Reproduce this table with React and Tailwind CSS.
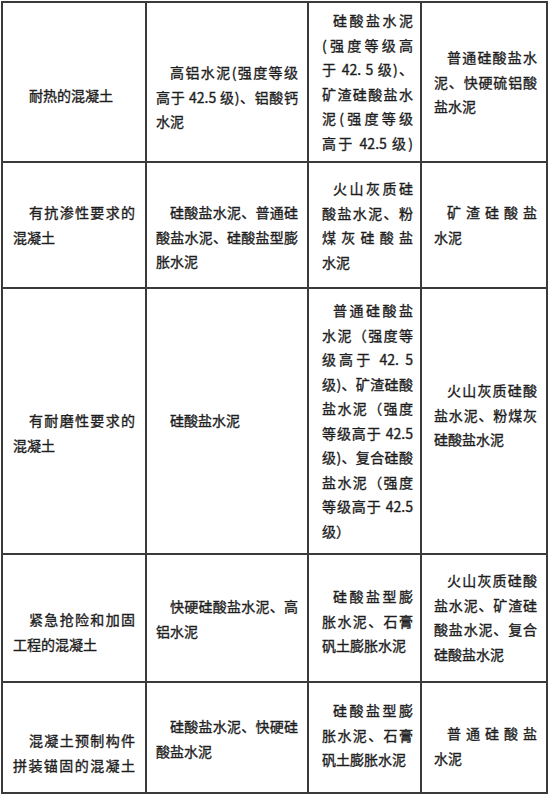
import clsx from "clsx";

// column paddings / first-line indent, matched to the scan
const COLS = [
  { pad: "pl-[10px] pr-[10px]", indent: "pl-[16px]" },
  { pad: "pl-[9px] pr-[9px]", indent: "pl-[14px]" },
  { pad: "pl-[13px] pr-[7px]", indent: "pl-[11px]" },
  { pad: "pl-[12px] pr-[9px]", indent: "pl-[13px]" },
];

// j = how many lines (from the top) are spread to the full width
const ROWS = [
  [
    { pt: "pt-[80px]", j: 0, lines: ["耐热的混凝土"] },
    { pt: "pt-[57px]", j: 2, lines: ["高铝水泥(强度等级", "高于 42.5 级)、铝酸钙", "水泥"] },
    {
      pt: "pt-[5px]",
      j: 6,
      lines: ["硅酸盐水泥", "(强度等级高", "于 42. 5 级)、", "矿渣硅酸盐水", "泥(强度等级", "高于 42.5 级)"],
    },
    { pt: "pt-[42px]", j: 2, lines: ["普通硅酸盐水", "泥、快硬硫铝酸", "盐水泥"] },
  ],
  [
    { pt: "pt-[37px]", j: 1, lines: ["有抗渗性要求的", "混凝土"] },
    { pt: "pt-[37px]", j: 2, lines: ["硅酸盐水泥、普通硅", "酸盐水泥、硅酸盐型膨", "胀水泥"] },
    { pt: "pt-[13px]", j: 3, lines: ["火山灰质硅", "酸盐水泥、粉", "煤灰硅酸盐", "水泥"] },
    { pt: "pt-[37px]", j: 1, lines: ["矿渣硅酸盐", "水泥"] },
  ],
  [
    { pt: "pt-[119px]", j: 1, lines: ["有耐磨性要求的", "混凝土"] },
    { pt: "pt-[119px]", j: 0, lines: ["硅酸盐水泥"] },
    {
      pt: "pt-[9px]",
      j: 9,
      lines: [
        "普通硅酸盐",
        "水泥（强度等",
        "级高于 42. 5",
        "级)、矿渣硅酸",
        "盐水泥（强度",
        "等级高于 42.5",
        "级)、复合硅酸",
        "盐水泥（强度",
        "等级高于 42.5",
        "级）",
      ],
    },
    { pt: "pt-[89px]", j: 2, lines: ["火山灰质硅酸", "盐水泥、粉煤灰", "硅酸盐水泥"] },
  ],
  [
    { pt: "pt-[52px]", j: 1, lines: ["紧急抢险和加固", "工程的混凝土"] },
    { pt: "pt-[39px]", j: 1, lines: ["快硬硅酸盐水泥、高", "铝水泥"] },
    { pt: "pt-[29px]", j: 2, lines: ["硅酸盐型膨", "胀水泥、石膏", "矾土膨胀水泥"] },
    { pt: "pt-[13px]", j: 3, lines: ["火山灰质硅酸", "盐水泥、矿渣硅", "酸盐水泥、复合", "硅酸盐水泥"] },
  ],
  [
    { pt: "pt-[45px]", j: 2, lines: ["混凝土预制构件", "拼装锚固的混凝土"] },
    { pt: "pt-[31px]", j: 1, lines: ["硅酸盐水泥、快硬硅", "酸盐水泥"] },
    { pt: "pt-[15px]", j: 2, lines: ["硅酸盐型膨", "胀水泥、石膏", "矾土膨胀水泥"] },
    { pt: "pt-[38px]", j: 1, lines: ["普通硅酸盐", "水泥"] },
  ],
];

function Cell({ col, cell }) {
  return (
    <div className={clsx("border-r-2 border-b-2 border-[#3a3a3a]", COLS[col].pad, cell.pt)}>
      {cell.lines.map((line, i) => (
        <div
          key={i}
          className={clsx(
            i === 0 && COLS[col].indent,
            i < cell.j && "text-justify [text-align-last:justify]"
          )}
        >
          {line}
        </div>
      ))}
    </div>
  );
}

export default function App() {
  return (
    <div className="min-h-screen bg-white pt-[1px] pl-[1px]">
      <div className="grid w-max grid-cols-[144px_162px_113px_126px] grid-rows-[160px_126px_266px_128px_111px] border-t-2 border-l-2 border-[#3a3a3a] font-['Noto_Sans_CJK_SC','Noto_Sans',sans-serif] text-[14px] leading-[24.5px] text-[#1e1e1e] [-webkit-text-stroke:0.35px_#1e1e1e]">
        {ROWS.map((row, r) =>
          row.map((cell, c) => <Cell key={`${r}-${c}`} col={c} cell={cell} />)
        )}
      </div>
    </div>
  );
}
